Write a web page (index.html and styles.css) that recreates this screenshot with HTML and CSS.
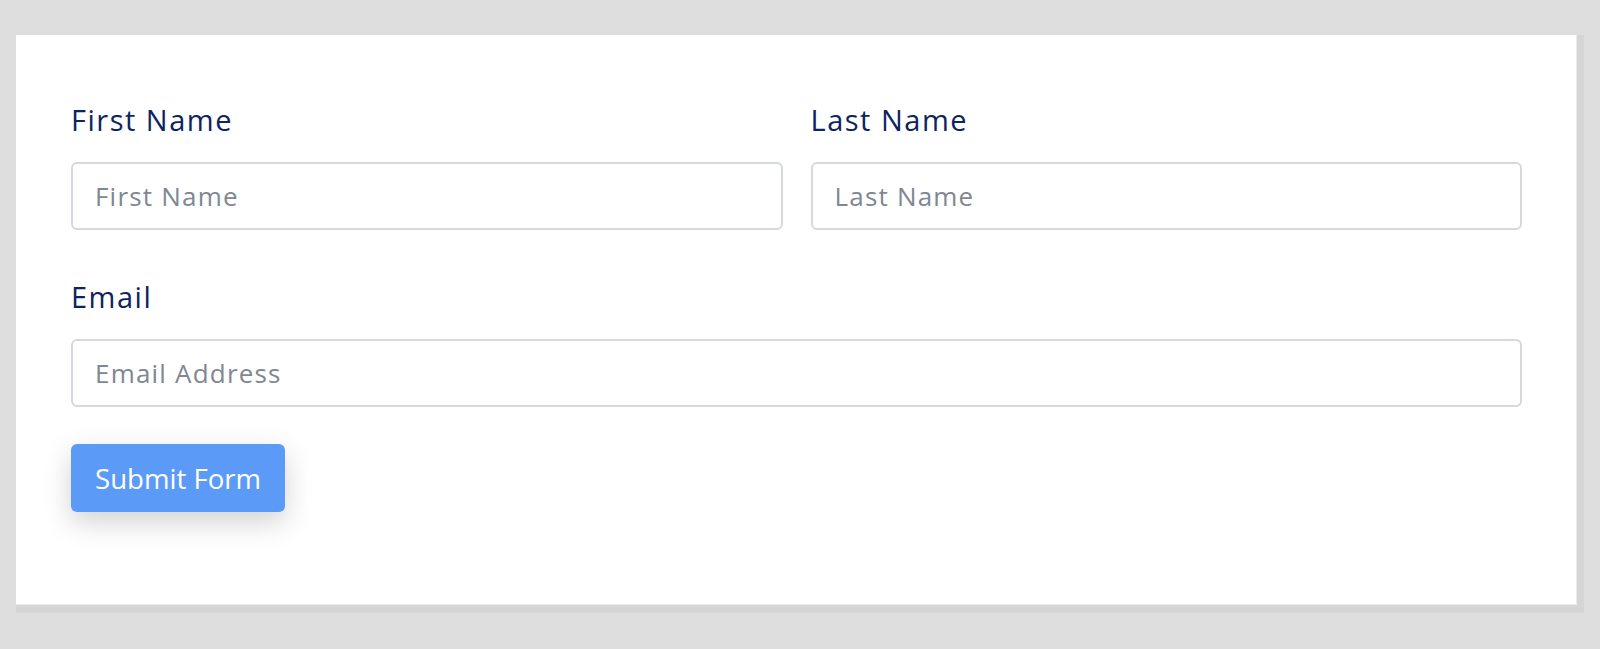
FILE: index.html
```html
<!DOCTYPE html>
<html lang="en">
<head>
<meta charset="utf-8">
<title>Form</title>
<link rel="stylesheet" href="styles.css">
</head>
<body>
  <div class="card">
    <form class="form">
      <div class="row">
        <div class="field">
          <label class="label" for="first">First Name</label>
          <input class="input" id="first" type="text" placeholder="First Name">
        </div>
        <div class="field">
          <label class="label" for="last">Last Name</label>
          <input class="input" id="last" type="text" placeholder="Last Name">
        </div>
      </div>
      <div class="field field-email">
        <label class="label" for="email">Email</label>
        <input class="input" id="email" type="email" placeholder="Email Address">
      </div>
      <button class="btn" type="button">Submit Form</button>
    </form>
  </div>
</body>
</html>
```

FILE: styles.css
```css
html, body {
  margin: 0;
  padding: 0;
}

body {
  background: #dedede;
  font-family: "Open Sans", "Noto Sans", sans-serif;
  overflow: hidden;
}

.card {
  margin: 35px 16px 0 16px;
  background: #ffffff;
  border-right: 7px solid #d5d5d5;
  border-bottom: 8px solid #d5d5d5;
  box-shadow: inset -1px -1px 0 #ececec;
  padding: 65px 55px 93px 55px;
}

.form {
  display: flex;
  flex-direction: column;
  align-items: flex-start;
}

.row {
  display: grid;
  grid-template-columns: 1fr 1fr;
  column-gap: 28px;
  width: 100%;
}

.field {
  display: flex;
  flex-direction: column;
  width: 100%;
}

.field-email {
  margin-top: 47px;
}

.label {
  font-size: 29px;
  font-weight: 500;
  line-height: 40px;
  color: #0c2461;
  margin-bottom: 22px;
  letter-spacing: 1.5px;
}

.input {
  box-sizing: border-box;
  height: 68px;
  width: 100%;
  border: 2px solid #d5d9de;
  border-radius: 6px;
  padding: 0 22px;
  font-family: inherit;
  font-size: 26px;
  letter-spacing: 1.2px;
  color: #333;
  background: #fff;
  outline: none;
}

.input::placeholder {
  color: #7e8792;
  opacity: 1;
}

.btn {
  margin-top: 37px;
  height: 68px;
  padding: 0 24px;
  border: none;
  border-radius: 6px;
  background: #5b9bf7;
  color: #ffffff;
  font-family: inherit;
  font-size: 27.6px;
  letter-spacing: 0;
  box-shadow: 0 10px 28px rgba(0, 0, 0, 0.18);
  cursor: pointer;
}
```
